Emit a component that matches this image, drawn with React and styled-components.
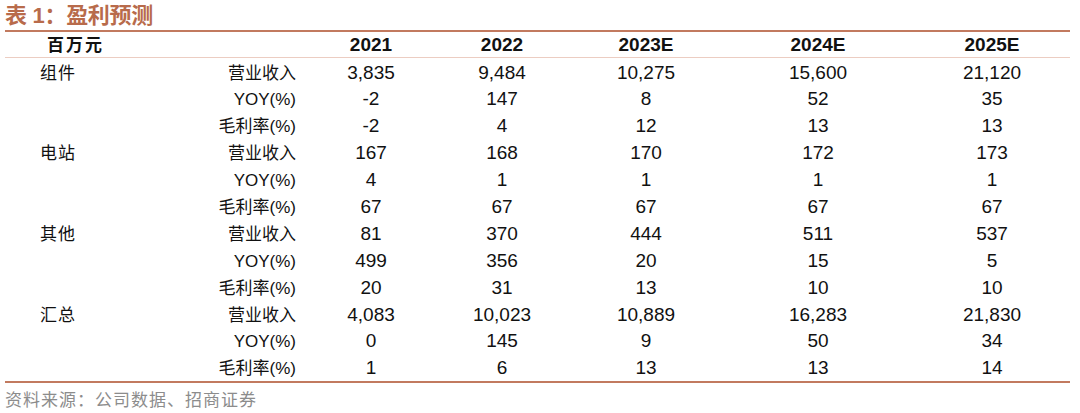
import styled, { createGlobalStyle } from "styled-components";

const GlobalStyle = createGlobalStyle`
  body {
    margin: 0;
    background: #ffffff;
    font-family: "Liberation Sans", "Noto Sans CJK SC", sans-serif;
    color: #111111;
  }
`;

const Page = styled.div`
  width: 1080px;
  height: 413px;
  padding-left: 5px;
  box-sizing: border-box;
  overflow: hidden;
`;

const Title = styled.div`
  height: 30px;
  line-height: 32px;
  font-size: 22px;
  font-weight: bold;
  color: #b86b4b;
  font-family: "Liberation Sans", "Noto Sans CJK SC", sans-serif;
  letter-spacing: -0.3px;
`;

const Table = styled.div`
  width: 1065px;
  border-top: 2px solid #c27a5f;
  border-bottom: 2px solid #c27a5f;
`;

const Row = styled.div`
  display: grid;
  grid-template-columns: 195px 108px 126px 136px 152px 192px 156px;
  align-items: baseline;
  box-sizing: border-box;
  height: ${(p) => (p.$head ? "26px" : "26.9px")};
  padding-top: ${(p) => (p.$head ? "3px" : "4.5px")};
  line-height: 20px;
  border-bottom: ${(p) => (p.$head ? "1px solid #eccdc2" : "none")};
  font-weight: ${(p) => (p.$head ? "bold" : "normal")};
`;

const Group = styled.div`
  padding-left: ${(p) => (p.$head ? "42px" : "35px")};
  font-size: 17px;
  letter-spacing: ${(p) => (p.$head ? "2px" : "1px")};
`;

const Sub = styled.div`
  text-align: right;
  padding-right: 12px;
  font-size: 17px;
  white-space: nowrap;
`;

const Num = styled.div`
  text-align: center;
  font-size: 19px;
  white-space: nowrap;
`;

const Source = styled.div`
  margin-top: 3px;
  font-size: 17px;
  color: #8c8c8c;
  letter-spacing: 1px;
`;

const years = ["2021", "2022", "2023E", "2024E", "2025E"];

const groups = [
  {
    name: "组件",
    rows: [
      ["营业收入", "3,835", "9,484", "10,275", "15,600", "21,120"],
      ["YOY(%)", "-2", "147", "8", "52", "35"],
      ["毛利率(%)", "-2", "4", "12", "13", "13"],
    ],
  },
  {
    name: "电站",
    rows: [
      ["营业收入", "167", "168", "170", "172", "173"],
      ["YOY(%)", "4", "1", "1", "1", "1"],
      ["毛利率(%)", "67", "67", "67", "67", "67"],
    ],
  },
  {
    name: "其他",
    rows: [
      ["营业收入", "81", "370", "444", "511", "537"],
      ["YOY(%)", "499", "356", "20", "15", "5"],
      ["毛利率(%)", "20", "31", "13", "10", "10"],
    ],
  },
  {
    name: "汇总",
    rows: [
      ["营业收入", "4,083", "10,023", "10,889", "16,283", "21,830"],
      ["YOY(%)", "0", "145", "9", "50", "34"],
      ["毛利率(%)", "1", "6", "13", "13", "14"],
    ],
  },
];

export default function App() {
  return (
    <Page>
      <GlobalStyle />
      <Title>表 1：盈利预测</Title>
      <Table>
        <Row $head>
          <Group $head>百万元</Group>
          <Sub />
          {years.map((y) => (
            <Num key={y}>{y}</Num>
          ))}
        </Row>
        {groups.map((g) =>
          g.rows.map((r, i) => (
            <Row key={g.name + i}>
              <Group>{i === 0 ? g.name : ""}</Group>
              <Sub>{r[0]}</Sub>
              {r.slice(1).map((v, j) => (
                <Num key={j}>{v}</Num>
              ))}
            </Row>
          ))
        )}
      </Table>
      <Source>资料来源：公司数据、招商证券</Source>
    </Page>
  );
}
